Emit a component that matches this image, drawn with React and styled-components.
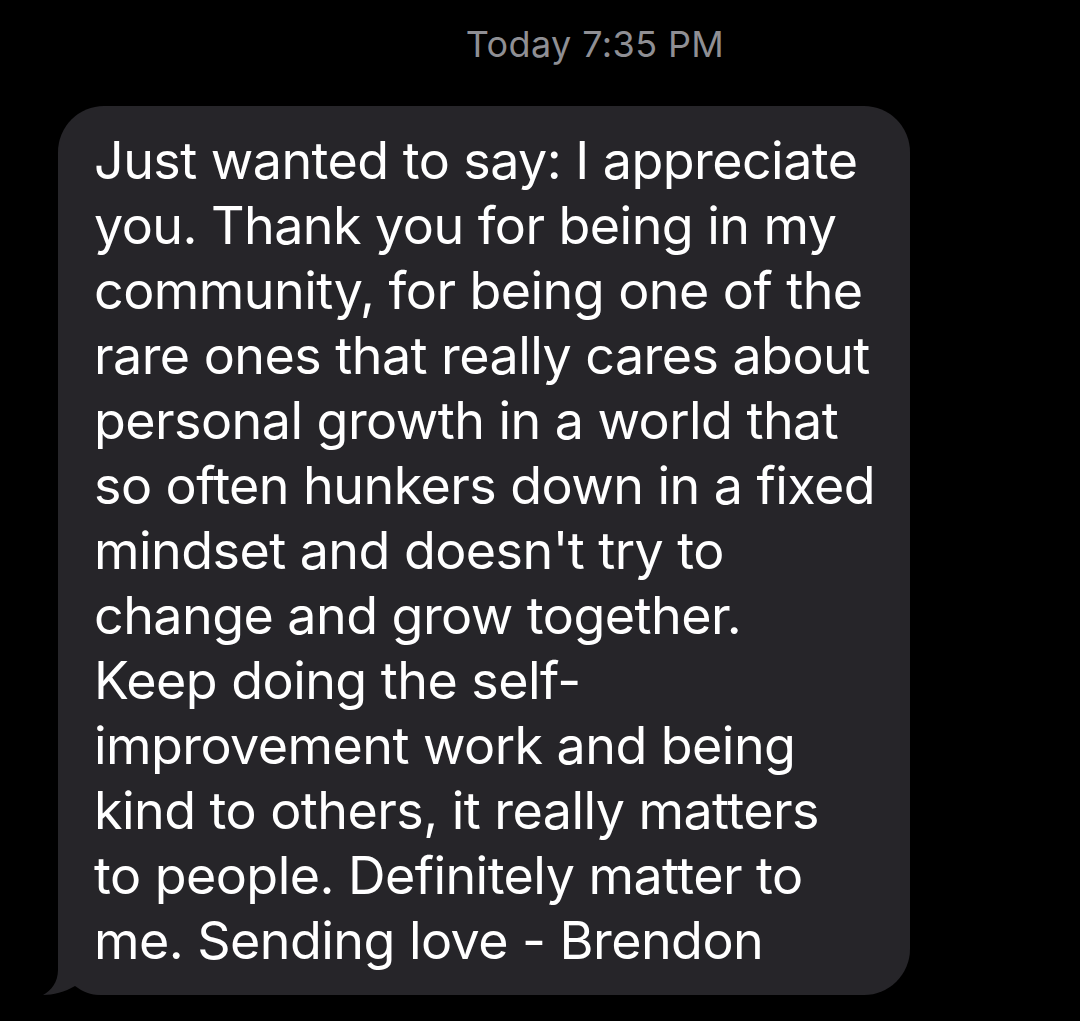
import React from 'react'
import styled, { createGlobalStyle } from 'styled-components'

const GlobalStyle = createGlobalStyle`
  html, body {
    margin: 0;
    padding: 0;
    background: #000;
  }
  body {
    font-family: Inter, "Liberation Sans", sans-serif;
    -webkit-font-smoothing: antialiased;
  }
`

const lines = [
  'Just wanted to say: I appreciate',
  'you. Thank you for being in my',
  'community, for being one of the',
  'rare ones that really cares about',
  'personal growth in a world that',
  'so often hunkers down in a fixed',
  "mindset and doesn't try to",
  'change and grow together.',
  'Keep doing the self-',
  'improvement work and being',
  'kind to others, it really matters',
  'to people. Definitely matter to',
  'me. Sending love - Brendon',
]

const Screen = styled.div`
  width: 1080px;
  height: 1021px;
  background: #000;
  overflow: hidden;
  display: flex;
  flex-direction: column;
`

const Stamp = styled.div`
  margin-top: 26px;
  padding-left: 110px;
  text-align: center;
  color: #8f8f94;
  font-size: 36px;
  line-height: 36px;
  letter-spacing: 0.4px;
`

const Row = styled.div`
  margin-top: 44px;
  padding-left: 58px;
  display: flex;
`

const Bubble = styled.div`
  position: relative;
  width: 852px;
  box-sizing: border-box;
  padding: 22px 0 22px 36px;
  background: #262529;
  border-radius: 46px;
`

const Tail = styled.svg`
  position: absolute;
  left: -15px;
  bottom: 0;
  width: 60px;
  height: 55px;
  display: block;
`

const Text = styled.div`
  position: relative;
  color: #fff;
  font-size: 52px;
  line-height: 65px;
  letter-spacing: -0.55px;
`

const Line = styled.div`
  white-space: nowrap;
`

const App = () => {
  return (
    <Screen>
      <GlobalStyle />
      <Stamp>Today 7:35 PM</Stamp>
      <Row>
        <Bubble>
          <Tail viewBox="0 0 60 55">
            <path
              d="M15 0 L15 30 C15 42 8 51 0 55 C10 55 22 52 32 46 C40 52 48 55 57 55 L60 55 L60 0 Z"
              fill="#262529"
            />
          </Tail>
          <Text>
            {lines.map((l, i) => (
              <Line key={i}>{l}</Line>
            ))}
          </Text>
        </Bubble>
      </Row>
    </Screen>
  )
}

export default App
